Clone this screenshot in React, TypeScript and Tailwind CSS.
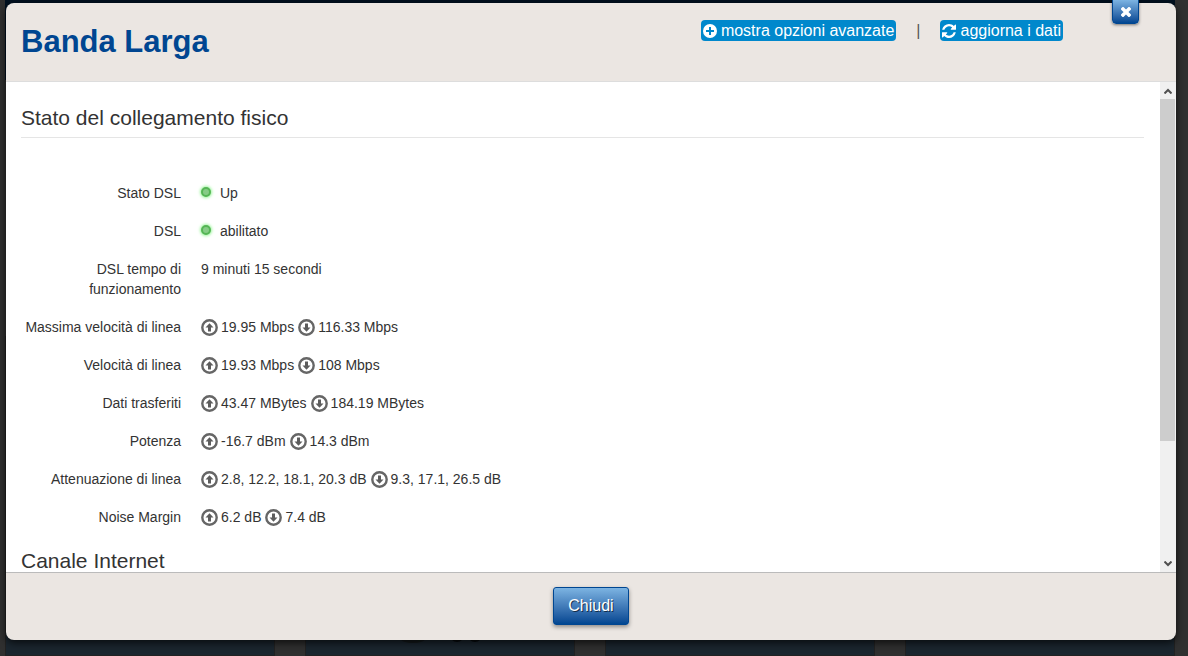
import { useState } from "react";

type Row = {
  label: string;
  value?: string;
  led?: boolean;
  up?: string;
  down?: string;
};

const rows: Row[] = [
  { label: "Stato DSL", value: "Up", led: true },
  { label: "DSL", value: "abilitato", led: true },
  { label: "DSL tempo di funzionamento", value: "9 minuti 15 secondi" },
  { label: "Massima velocità di linea", up: "19.95 Mbps", down: "116.33 Mbps" },
  { label: "Velocità di linea", up: "19.93 Mbps", down: "108 Mbps" },
  { label: "Dati trasferiti", up: "43.47 MBytes", down: "184.19 MBytes" },
  { label: "Potenza", up: "-16.7 dBm", down: "14.3 dBm" },
  { label: "Attenuazione di linea", up: "2.8, 12.2, 18.1, 20.3 dB", down: "9.3, 17.1, 26.5 dB" },
  { label: "Noise Margin", up: "6.2 dB", down: "7.4 dB" },
];

const PlusIcon = () => (
  <svg viewBox="0 0 14 14" className="size-3.5 shrink-0" aria-hidden="true">
    <circle cx="7" cy="7" r="7" fill="currentColor" />
    <path d="M7 3v8M3 7h8" stroke="#0088cc" strokeWidth="2" />
  </svg>
);

const RefreshIcon = () => (
  <svg viewBox="128 128 1536 1536" className="size-3.5 shrink-0" fill="currentColor" aria-hidden="true">
    <path d="M1639 1056q0 5-1 7-64 268-268 434.500t-478 166.500q-146 0-282.500-55t-243.500-157l-129 129q-19 19-45 19t-45-19-19-45v-448q0-26 19-45t45-19h448q26 0 45 19t19 45-19 45l-137 137q71 66 161 102t187 36q134 0 250-65t186-179q11-17 53-117 8-23 30-23h192q13 0 22.500 9.500t9.500 22.500zm25-800v448q0 26-19 45t-45 19h-448q-26 0-45-19t-19-45 19-45l138-138q-148-137-349-137-134 0-250 65t-186 179q-11 17-53 117-8 23-30 23h-199q-13 0-22.500-9.500t-9.500-22.500v-7q65-268 270-434.500t480-166.500q146 0 284 55.500t245 156.500l130-129q19-19 45-19t45 19 19 45z" />
  </svg>
);

const ArrowIcon = ({ down = false }: { down?: boolean }) => (
  <svg
    viewBox="0 0 17 17"
    className={down ? "size-[17px] shrink-0 rotate-180" : "size-[17px] shrink-0"}
    role="img"
    aria-label={down ? "download" : "upload"}
  >
    <circle cx="8.5" cy="8.5" r="7.2" fill="none" stroke="#666666" strokeWidth="2.4" />
    <path d="M8.5 4.200l4 4.300h-2.500v4h-3v-4H4.500z" fill="#5c5c5c" />
  </svg>
);

const Led = () => (
  <span className="mb-[3px] size-[10px] rounded-full border-2 border-[#55b555] bg-[#86cc86] shadow-[0_0_3px_1px_#9df59d]" />
);

// Page behind the dialog, dimmed by the backdrop
const Background = () => (
  <div className="absolute inset-0 flex flex-col justify-between bg-[#303030]" aria-hidden="true">
    <div className="mr-[13px] ml-[5px] h-20 bg-[#00101f]" />
    <div className="mr-[13px] ml-[5px] grid h-80 grid-cols-4 gap-[30px]">
      <div className="border border-[#222222] bg-[#1b262f]" />
      <div className="flex items-end border border-[#222222] bg-[#1b262f] pb-2.5 pl-[94px]">
        <svg viewBox="0 0 82 20" className="h-5 w-[82px]">
          <ellipse cx="13" cy="14" rx="12" ry="4" fill="#151a1c" />
          <path d="M14 11l5 5 5-5z" fill="#0c2a10" />
          <circle cx="57" cy="10" r="7" fill="#060a0d" />
          <circle cx="75" cy="10" r="7" fill="#060a0d" />
        </svg>
      </div>
      <div className="border border-[#222222] bg-[#1b262f]" />
      <div className="border border-[#222222] bg-[#1b262f]" />
    </div>
  </div>
);

const ScrollBar = () => (
  <div className="flex w-4 shrink-0 flex-col bg-[#f0f0f0]" aria-hidden="true">
    <div className="flex h-[17px] w-[15px] items-center justify-center">
      <svg viewBox="0 0 8 6" className="h-1.5 w-2">
        <path d="M0.500 5.500L4 2l3.500 3.500" fill="none" stroke="#505050" strokeWidth="2" />
      </svg>
    </div>
    <div className="flex flex-1 flex-col">
      <div className="h-3/4 w-[15px] bg-[#cdcdcd]" />
    </div>
    <div className="flex h-[17px] w-[15px] items-center justify-center">
      <svg viewBox="0 0 8 6" className="h-1.5 w-2">
        <path d="M0.500 0.500L4 4l3.500-3.500" fill="none" stroke="#505050" strokeWidth="2" />
      </svg>
    </div>
  </div>
);

const StatusRow = ({ row }: { row: Row }) => (
  <div className="flex gap-5">
    <dt className="w-40 shrink-0 text-right">{row.label}</dt>
    <dd className="flex h-5 items-center gap-1">
      {row.led && (
        <span className="flex w-[15px] items-center">
          <Led />
        </span>
      )}
      {row.value}
      {row.up && (
        <span className="flex items-center gap-[3px]">
          <ArrowIcon />
          {row.up}
        </span>
      )}
      {row.down && (
        <span className="flex items-center gap-[3px]">
          <ArrowIcon down />
          {row.down}
        </span>
      )}
    </dd>
  </div>
);

const App = () => {
  const [open, setOpen] = useState(true);
  const close = () => setOpen(false);

  return (
    <div className="relative min-h-screen overflow-hidden font-['Liberation_Sans',Arial,sans-serif] text-sm leading-5 text-[#333333]">
      <Background />
      {open && (
        <div
          role="dialog"
          aria-labelledby="dialog-title"
          className="relative mt-[3px] mr-3 ml-1.5 rounded-lg bg-[#ebe6e2] shadow-[0_3px_9px_rgba(0,0,0,0.7)]"
        >
          <button
            type="button"
            onClick={close}
            aria-label="Chiudi finestra"
            className="absolute -top-1 right-[37px] flex h-[25px] w-[27px] items-center justify-center rounded-b-sm border border-[#004691] bg-linear-to-b from-[#7db4e2] to-[#004691] text-white shadow-[0_1px_3px_rgba(0,0,0,0.5)]"
          >
            <svg viewBox="0 0 10 10" className="size-2.5" aria-hidden="true">
              <path d="M2 2l6 6M8 2l-6 6" stroke="currentColor" strokeWidth="3.500" strokeLinecap="square" />
            </svg>
          </button>

          <header className="flex items-start justify-between border-b border-[#dddddd] pt-[17px] pr-[113px] pb-[19px] pl-[15px]">
            <h2 id="dialog-title" className="pt-0.5 text-[31px] leading-10 font-bold text-[#004691]">
              Banda Larga
            </h2>
            <div className="flex items-center gap-5 text-base leading-[21px]">
              <button type="button" className="flex items-center gap-1 rounded bg-[#0088cc] px-0.5 text-white">
                <PlusIcon />
                mostra opzioni avanzate
              </button>
              <span className="text-[#555555]">|</span>
              <button type="button" className="flex items-center gap-1 rounded bg-[#0088cc] px-0.5 text-white">
                <RefreshIcon />
                aggiorna i dati
              </button>
            </div>
          </header>

          <div className="flex max-h-[490px] bg-white">
            <div className="flex-1 overflow-y-auto py-4 pr-4 pl-[15px] [scrollbar-width:none]">
              <h3 className="border-b border-[#e5e5e5] text-[21px] leading-[39px]">Stato del collegamento fisico</h3>
              <dl className="mt-[45px] flex flex-col gap-[18px]">
                {rows.map((row) => (
                  <StatusRow key={row.label} row={row} />
                ))}
              </dl>
              <h3 className="mt-3.5 border-b border-[#e5e5e5] text-[21px] leading-[39px]">Canale Internet</h3>
            </div>
            <ScrollBar />
          </div>

          <footer className="flex justify-center rounded-b-lg border-t border-[#bbbbbb] pt-3.5 pb-[15px]">
            <button
              type="button"
              onClick={close}
              className="rounded-[3px] border border-[#004691] bg-linear-to-b from-[#7db4e2] to-[#004691] px-3.5 py-2 text-base leading-5 text-white shadow-[0_2px_4px_rgba(0,0,0,0.4)] [text-shadow:1px_1px_0_rgba(0,0,0,0.6)]"
            >
              Chiudi
            </button>
          </footer>
        </div>
      )}
    </div>
  );
};

export default App;
